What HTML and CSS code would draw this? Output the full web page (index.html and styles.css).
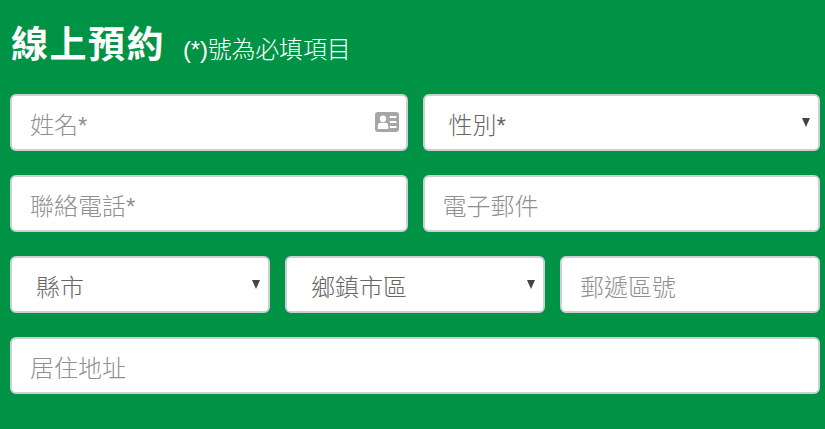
FILE: index.html
```html
<!DOCTYPE html>
<html>
<head>
    <title>線上預約</title>
    <meta charset="UTF-8">
    <meta name="viewport" content="width=device-width, initial-scale=1.0">
    <link rel="stylesheet" href="styles.css">
</head>
<body>
    <form class="booking">
        <header class="header">
            <h1>線上預約</h1>
            <span class="note">(*)號為必填項目</span>
        </header>
        <div class="row">
            <div class="field">
                <input type="text" placeholder="姓名*">
                <svg class="field-icon" viewBox="0 0 24 20" width="24" height="20" aria-hidden="true">
                    <path fill="#a6a6a6" fill-rule="evenodd" d="M3 0h18a3 3 0 0 1 3 3v14a3 3 0 0 1-3 3H3a3 3 0 0 1-3-3V3a3 3 0 0 1 3-3zM8 3.500a3.200 3.200 0 1 0 0 6.400a3.200 3.200 0 0 0 0-6.400zM2.800 17h10.400v-3.200c0-1.900-1.300-3-2.900-3H5.700c-1.600 0-2.900 1.100-2.900 3zM14.800 4v2h6.700V4zM14.800 9v2h6.700V9zM14.800 14v2h6.700v-2z"/>
                </svg>
            </div>
            <div class="field">
                <select class="gender">
                    <option>性別*</option>
                </select>
                <span class="arrow"></span>
            </div>
        </div>
        <div class="row">
            <div class="field"><input type="text" placeholder="聯絡電話*"></div>
            <div class="field"><input type="text" placeholder="電子郵件"></div>
        </div>
        <div class="row row-three">
            <div class="field">
                <select>
                    <option>縣市</option>
                </select>
                <span class="arrow"></span>
            </div>
            <div class="field">
                <select>
                    <option>鄉鎮市區</option>
                </select>
                <span class="arrow"></span>
            </div>
            <div class="field"><input type="text" placeholder="郵遞區號"></div>
        </div>
        <div class="row row-one">
            <div class="field"><input type="text" placeholder="居住地址"></div>
        </div>
    </form>
</body>
</html>
```

FILE: styles.css
```css
body {
    font-family: "Liberation Sans", "Noto Sans CJK TC", sans-serif;
    margin: 0;
    background: #009245;
}
.booking {
    padding: 21px 5px 35px 10px;
}
.header {
    display: flex;
    align-items: baseline;
    gap: 18px;
    height: 49px;
    margin-bottom: 24px;
    padding-left: 1px;
    color: white;
}
.header h1 {
    margin: 0;
    font-size: 37px;
    line-height: 49px;
    font-weight: bold;
    letter-spacing: 1.5px;
}
.note {
    font-size: 24px;
    font-weight: 300;
    letter-spacing: -0.2px;
}
.row {
    display: grid;
    grid-template-columns: 1fr 1fr;
    gap: 15px;
    margin-bottom: 24px;
}
.row-three {
    grid-template-columns: repeat(3, 1fr);
}
.row-one {
    grid-template-columns: 1fr;
    margin-bottom: 0;
}
.field {
    position: relative;
}
input, select {
    display: block;
    box-sizing: border-box;
    width: 100%;
    height: 57px;
    margin: 0;
    padding: 6px 18px 0;
    font: inherit;
    font-size: 24px;
    font-weight: 300;
    color: #666;
    background: white;
    border: 2px solid #ccd0d4;
    border-radius: 6px;
    outline: none;
}
input::placeholder {
    color: #8f8f8f;
    opacity: 1;
}
select {
    appearance: none;
    padding-left: 24px;
}
.field-icon {
    position: absolute;
    top: 18px;
    right: 9px;
}
.arrow {
    position: absolute;
    top: 24px;
    right: 10px;
    width: 0;
    height: 0;
    border-left: 4.5px solid transparent;
    border-right: 4.5px solid transparent;
    border-top: 9px solid #444;
}
```
